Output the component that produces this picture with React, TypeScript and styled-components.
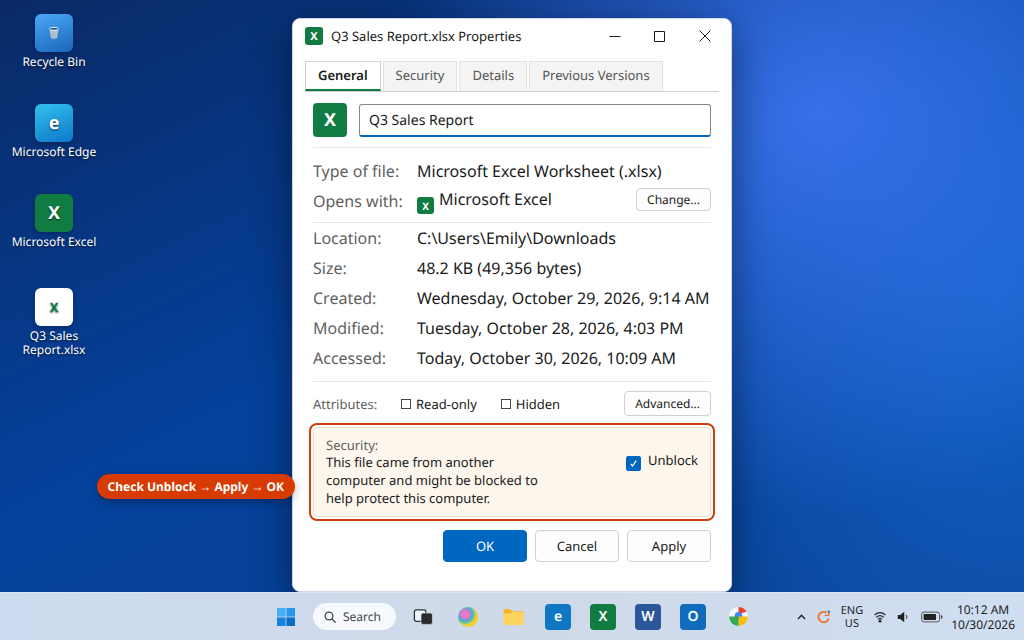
import React from "react";
import styled, { createGlobalStyle, css } from "styled-components";

const GlobalStyle = createGlobalStyle`
  *, *::before, *::after { box-sizing: border-box; text-rendering: geometricPrecision; }
  body {
    margin: 0;
    font-family: "Noto Sans", "Liberation Sans", sans-serif;
    font-size: 13px;
    color: #1a1a1a;
  }
  button, input { font: inherit; color: inherit; margin: 0; }
  button { cursor: pointer; }
  svg { display: block; }
`;

const Screen = styled.div`
  min-height: 100vh;
  display: flex;
  flex-direction: column;
  overflow: hidden;
  background:
    radial-gradient(ellipse 42% 62% at 80% 18%, rgba(66, 120, 246, 0.8), rgba(66, 120, 246, 0) 100%),
    radial-gradient(ellipse 40% 90% at 98% 45%, rgba(24, 116, 226, 0.65), rgba(24, 116, 226, 0) 100%),
    linear-gradient(155deg, #0a2a66 0%, #04419c 46%, #0a4192 100%);
`;

const Desktop = styled.main`
  flex: 1;
  display: grid;
  grid-template-columns: minmax(0, 1fr);
  > * { grid-area: 1 / 1; }
`;

const Shortcuts = styled.nav`
  justify-self: start;
  display: flex;
  flex-direction: column;
  gap: 35px;
  width: 92px;
  margin: 14px 8px;
`;

const Shortcut = styled.a<{ $file?: boolean }>`
  display: flex;
  flex-direction: column;
  align-items: center;
  gap: 3px;
  margin-top: ${(p) => (p.$file ? 4 : 0)}px;
  color: #fff;
  font-size: 12px;
  line-height: 14px;
  text-align: center;
  text-decoration: none;
  text-shadow: 0 1px 2px rgba(0, 0, 0, 0.7);
`;

const ShortcutTile = styled.span<{ $bg: string; $color?: string; $size?: number }>`
  display: grid;
  place-items: center;
  width: 38px;
  height: 38px;
  border-radius: 6px;
  background: ${(p) => p.$bg};
  color: ${(p) => p.$color ?? "#fff"};
  font-size: ${(p) => p.$size ?? 18}px;
  font-weight: 700;
  box-shadow: 0 2px 5px rgba(0, 0, 0, 0.25);
`;

const ShortcutLabel = styled.span`
  max-width: 100%;
`;

const Dialog = styled.section`
  justify-self: center;
  width: 440px;
  max-width: 100%;
  margin-top: 18px;
  padding: 0 12px 29px;
  border: 1px solid #cfd6e2;
  border-radius: 8px;
  background: #fff;
  box-shadow: 0 12px 40px rgba(0, 0, 0, 0.45);
`;

const TitleBar = styled.header`
  display: flex;
  align-items: center;
  height: 34px;
  margin-bottom: 8px;
`;

const Title = styled.h1`
  flex: 1;
  margin: 0 0 0 8px;
  font-size: 13px;
  font-weight: 400;
`;

const Badge = styled.span<{ $size: number; $font: number; $radius: number }>`
  flex: none;
  display: grid;
  place-items: center;
  width: ${(p) => p.$size}px;
  height: ${(p) => p.$size}px;
  border-radius: ${(p) => p.$radius}px;
  background: #107c41;
  color: #fff;
  font-size: ${(p) => p.$font}px;
  font-weight: 700;
  line-height: 1;
`;

const WindowControls = styled.div`
  display: flex;
  margin-right: -8px;
`;

const WindowButton = styled.button`
  display: grid;
  place-items: center;
  width: 45px;
  height: 34px;
  padding: 0;
  border: 0;
  background: transparent;
`;

const Tabs = styled.div`
  display: flex;
  gap: 2px;
  border-bottom: 1px solid #d0d0d0;
`;

const Tab = styled.button<{ $active?: boolean }>`
  height: 30px;
  padding: 0 12px 3px;
  border: 1px solid #e0e0e0;
  border-bottom: 0;
  background: #f4f4f4;
  color: #555;
  ${(p) =>
    p.$active &&
    css`
      padding-bottom: 1px;
      border-color: #d0d0d0;
      border-bottom: 2px solid #107c41;
      background: #fff;
      color: #1a1a1a;
      font-weight: 600;
    `}
`;

const Panel = styled.form`
  padding: 11px 8px 0;
`;

const NameRow = styled.div`
  display: flex;
  align-items: center;
  gap: 12px;
  padding-bottom: 10px;
`;

const NameInput = styled.input`
  flex: 1;
  min-width: 0;
  height: 33px;
  padding: 1px 9px 0;
  border: 1px solid #868686;
  border-bottom: 2px solid #0067c0;
  border-radius: 3px;
  background: #fff;
  font-size: 14px;
  outline: none;
`;

const Facts = styled.dl<{ $top: number; $bottom: number }>`
  margin: 0;
  padding: ${(p) => p.$top}px 0 ${(p) => p.$bottom}px;
  border-top: 1px solid #e8e8e8;
  font-size: 16px;
`;

const Fact = styled.div`
  display: grid;
  grid-template-columns: 104px minmax(0, 1fr);
  align-items: center;
  height: 30px;
  white-space: nowrap;
`;

const Term = styled.dt`
  color: #5f5f5f;
`;

const Detail = styled.dd`
  display: flex;
  align-items: center;
  margin: 0;
`;

const OpenerDetail = styled(Detail)`
  align-items: flex-start;
  height: 26px;
`;

const OpenerBadge = styled(Badge)`
  margin: 9px 5px 0 0;
`;

const SmallButton = styled.button`
  height: 23px;
  margin-left: auto;
  padding: 0 10px;
  border: 1px solid #d0d0d0;
  border-radius: 4px;
  background: #fdfdfd;
  font-size: 12px;
`;

const AdvancedButton = styled(SmallButton)`
  height: 25px;
`;

const AttributeRow = styled.div`
  display: flex;
  align-items: center;
  padding: 9px 0 11px;
  border-top: 1px solid #e8e8e8;
`;

const AttributeTitle = styled.span`
  width: 88px;
  color: #5f5f5f;
`;

const CheckLabel = styled.label`
  display: flex;
  align-items: center;
  gap: 5px;
  margin-right: 24px;
`;

const PlainCheck = styled.input`
  appearance: none;
  width: 10px;
  height: 10px;
  border: 1px solid #444;
  background: #fff;
`;

const SecurityBox = styled.section`
  position: relative;
  display: flex;
  justify-content: space-between;
  padding: 9px 12px 9px;
  border: 1px solid #e6dfd2;
  border-radius: 4px;
  background: #fdf6ec;
  outline: 2px solid #c9400f;
  outline-offset: 2px;
`;

const SecurityText = styled.div`
  width: 220px;
  line-height: 18px;
`;

const SecurityTitle = styled.div`
  line-height: 16px;
  color: #5f5f5f;
`;

const UnblockLabel = styled.label`
  display: flex;
  align-items: flex-start;
  gap: 7px;
  margin-top: 14px;
  line-height: 18px;
  height: 24px;
`;

const UnblockBox = styled.span`
  display: grid;
  margin-top: 5px;
  > * { grid-area: 1 / 1; }
`;

const UnblockCheck = styled.input`
  appearance: none;
  width: 15px;
  height: 15px;
  border-radius: 2px;
  border: 1px solid #0067c0;
  background: #fff;
  &:checked { background: #0067c0; }
`;

const Callout = styled.div`
  position: absolute;
  top: 46px;
  right: calc(100% + 19px);
  padding: 0 11px;
  border-radius: 13px;
  background: #d83b01;
  color: #fff;
  font-size: 12px;
  font-weight: 700;
  line-height: 25px;
  white-space: nowrap;
  box-shadow: 0 3px 8px rgba(0, 0, 0, 0.3);
`;

const Actions = styled.div`
  display: flex;
  justify-content: flex-end;
  gap: 8px;
  margin-top: 13px;
`;

const ActionButton = styled.button<{ $primary?: boolean }>`
  width: 84px;
  height: 32px;
  padding: 0;
  border: 1px solid ${(p) => (p.$primary ? "#0067c0" : "#d0d0d0")};
  border-radius: 4px;
  background: ${(p) => (p.$primary ? "#0067c0" : "#fdfdfd")};
  color: ${(p) => (p.$primary ? "#fff" : "#1a1a1a")};
`;

const Taskbar = styled.footer`
  display: grid;
  grid-template-columns: 1fr auto 1fr;
  align-items: center;
  height: 48px;
  border-top: 1px solid #dbe4f1;
  background: linear-gradient(90deg, #cddcf0, #cfd9e8 50%, #d0def2);
`;

const Pinned = styled.div`
  grid-column: 2;
  display: flex;
  align-items: center;
  gap: 9px;
`;

const PinButton = styled.button`
  display: grid;
  place-items: center;
  width: 36px;
  height: 36px;
  padding: 0;
  border: 0;
  background: transparent;
`;

const SearchButton = styled.button`
  display: flex;
  align-items: center;
  gap: 7px;
  width: 83px;
  height: 27px;
  padding: 0 0 0 11px;
  border: 0;
  border-radius: 14px;
  background: #f6f9fd;
  color: #444;
  font-size: 12px;
`;

const AppTile = styled.span<{ $bg: string }>`
  display: grid;
  place-items: center;
  width: 26px;
  height: 26px;
  border-radius: 4px;
  background: ${(p) => p.$bg};
  color: #fff;
  font-size: 14px;
  font-weight: 600;
`;

const Tray = styled.div`
  justify-self: end;
  display: flex;
  align-items: center;
  margin-right: 9px;
  color: #222;
  font-size: 11px;
  line-height: 13px;
  text-align: center;
`;

const TrayIcons = styled.div`
  display: flex;
  align-items: center;
  gap: 11px;
  margin-right: 8px;
`;

const Clock = styled.time`
  font-size: 12px;
  line-height: 15px;
`;

const facts = [
  ["Location:", "C:\\Users\\Emily\\Downloads"],
  ["Size:", "48.2 KB (49,356 bytes)"],
  ["Created:", "Wednesday, October 29, 2026, 9:14 AM"],
  ["Modified:", "Tuesday, October 28, 2026, 4:03 PM"],
  ["Accessed:", "Today, October 30, 2026, 10:09 AM"],
];

const BinIcon = () => (
  <svg width="12" height="14" viewBox="0 0 12 14">
    <path d="M1.6 3 L3 12 Q6 13.6 9 12 L10.4 3Z" fill="#c3ccd6" />
    <path d="M3.8 5 L4.4 11.8 M6 5V12.4 M8.2 5 L7.6 11.8" stroke="#93a1b1" strokeWidth=".7" />
    <ellipse cx="6" cy="2.8" rx="4.7" ry="1.5" fill="#1f5d9c" stroke="#edf3f8" strokeWidth="1" />
  </svg>
);

const StartIcon = () => (
  <svg width="18" height="18" viewBox="0 0 18 18">
    <path d="M0 0h8.6v8.6H0z" fill="#45aef7" />
    <path d="M9.4 0H18v8.6H9.4z" fill="#2b97ec" />
    <path d="M0 9.4h8.6V18H0z" fill="#1583df" />
    <path d="M9.4 9.4H18V18H9.4z" fill="#0d6cc4" />
  </svg>
);

const SearchIcon = () => (
  <svg width="12" height="12" viewBox="0 0 12 12" fill="none" stroke="#444" strokeWidth="1.3" strokeLinecap="round">
    <circle cx="5" cy="5" r="3.9" />
    <path d="M8 8l3.2 3.2" />
  </svg>
);

const TaskViewIcon = () => (
  <svg width="20" height="18" viewBox="0 0 20 18">
    <rect x="1.4" y="1.9" width="11.4" height="11.4" rx="1.8" fill="#eef3fa" stroke="#333" strokeWidth="1.3" />
    <rect x="8" y="5" width="11.4" height="11.4" rx="2" fill="#2b2b2b" stroke="#d5deec" strokeWidth=".7" />
  </svg>
);

const CopilotIcon = () => (
  <svg width="20" height="20" viewBox="0 0 20 20">
    <defs>
      <radialGradient id="orb" cx="36%" cy="36%" r="66%">
        <stop offset="0" stopColor="#f57cc4" />
        <stop offset=".32" stopColor="#d879cc" />
        <stop offset=".52" stopColor="#44afd6" />
        <stop offset=".66" stopColor="#72c496" />
        <stop offset=".82" stopColor="#f0d02e" />
        <stop offset="1" stopColor="#f8cf14" />
      </radialGradient>
    </defs>
    <circle cx="10" cy="10" r="10" fill="url(#orb)" />
  </svg>
);

const FolderIcon = () => (
  <svg width="21" height="18" viewBox="0 0 21 18">
    <path d="M.5 2.2Q.5 1 1.7 1H7l2.2 2.2h10.1q1.2 0 1.2 1.2V9H.5z" fill="#f3b52f" />
    <path d="M.5 5.2h8L10.3 4h9q1.2 0 1.2 1.2v10.6q0 1.2-1.2 1.2H1.7Q.5 17 .5 15.8z" fill="#ffd45c" />
  </svg>
);

const ChromeIcon = () => (
  <svg width="19" height="19" viewBox="0 0 19 19">
    <circle cx="9.5" cy="9.5" r="9.5" fill="#f5f7fa" />
    <path d="M9.5 9.5V0A9.5 9.5 0 0 1 17.7 4.7L13 6z" fill="#ea4335" />
    <path d="M9.5 9.5H19A9.5 9.5 0 0 1 9.5 19z" fill="#fbbc05" />
    <path d="M9.5 9.5V19A9.5 9.5 0 0 1 0 9.5z" fill="#34a853" />
    <circle cx="9.5" cy="8.8" r="3.8" fill="#4285f4" />
    <path d="M9.5 9.5h4v3.5h-4z" fill="#fbbc05" />
    <path d="M5.5 9.5h4v3.5h-4z" fill="#34a853" />
  </svg>
);

const ChevronIcon = () => (
  <svg width="9" height="6" viewBox="0 0 9 6" fill="none" stroke="#222" strokeWidth="1.4">
    <path d="M1 5l3.5-3.7L8 5" />
  </svg>
);

const SyncIcon = () => (
  <svg width="13" height="14" viewBox="0 0 13 14" fill="none">
    <path d="M9.6 2.8A5.2 5.2 0 1 0 11.7 8.4" stroke="#f0722b" strokeWidth="1.8" />
    <path d="M11.8 1v4.4H7.6" stroke="#f0722b" strokeWidth="1.3" />
    <path d="M9.8.8h2.8v2.7z" fill="#1b78d0" />
  </svg>
);

const WifiIcon = () => (
  <svg width="12" height="12" viewBox="0 0 12 12" fill="none" stroke="#222" strokeWidth="1.2">
    <path d="M.6 4Q6-.6 11.4 4M2.3 6.2Q6 3 9.7 6.2M4 8.2Q6 6.4 8 8.2" />
    <circle cx="6" cy="10.2" r="1.4" fill="#222" stroke="none" />
  </svg>
);

const VolumeIcon = () => (
  <svg width="13" height="12" viewBox="0 0 13 12">
    <path d="M.8 4h2.4L7.2.8v10.4L3.2 8H.8z" fill="#222" />
    <path d="M9.2 4Q10.6 6 9.2 8" fill="none" stroke="#555" strokeWidth="1.2" />
  </svg>
);

const BatteryIcon = () => (
  <svg width="22" height="12" viewBox="0 0 22 12">
    <rect x=".6" y="1.1" width="18" height="9.8" rx="2.4" fill="none" stroke="#555" />
    <rect x="2.6" y="3" width="12.4" height="6" rx=".8" fill="#222" />
    <path d="M20 4q1.6.3 1.6 2T20 8z" fill="#444" />
  </svg>
);

export default function App() {
  return (
    <Screen>
      <GlobalStyle />
      <Desktop>
        <Shortcuts aria-label="Desktop shortcuts">
          <Shortcut href="#bin">
            <ShortcutTile $bg="linear-gradient(160deg, #4aa8f8, #1a66b8)"><BinIcon /></ShortcutTile>
            <ShortcutLabel>Recycle Bin</ShortcutLabel>
          </Shortcut>
          <Shortcut href="#edge">
            <ShortcutTile $bg="linear-gradient(160deg, #34c1ee, #0c78c8)">e</ShortcutTile>
            <ShortcutLabel>Microsoft Edge</ShortcutLabel>
          </Shortcut>
          <Shortcut href="#excel">
            <ShortcutTile $bg="#107c41">X</ShortcutTile>
            <ShortcutLabel>Microsoft Excel</ShortcutLabel>
          </Shortcut>
          <Shortcut href="#report" $file>
            <ShortcutTile $bg="#fff" $color="#107c41" $size={13}>X</ShortcutTile>
            <ShortcutLabel>Q3 Sales Report.xlsx</ShortcutLabel>
          </Shortcut>
        </Shortcuts>

        <Dialog role="dialog" aria-labelledby="dialog-title">
          <TitleBar>
            <Badge $size={18} $font={11} $radius={3}>X</Badge>
            <Title id="dialog-title">Q3 Sales Report.xlsx Properties</Title>
            <WindowControls>
              <WindowButton type="button" aria-label="Minimize">
                <svg width="12" height="12" viewBox="0 0 12 12" stroke="#1a1a1a"><path d="M.5 6.5h11" /></svg>
              </WindowButton>
              <WindowButton type="button" aria-label="Maximize">
                <svg width="12" height="12" viewBox="0 0 12 12" stroke="#1a1a1a" fill="none"><path d="M.5 1.500h10v10H.5z" /></svg>
              </WindowButton>
              <WindowButton type="button" aria-label="Close">
                <svg width="12" height="12" viewBox="0 0 12 12" stroke="#1a1a1a"><path d="M.5.5l11 11M11.5.5l-11 11" /></svg>
              </WindowButton>
            </WindowControls>
          </TitleBar>

          <Tabs role="tablist">
            <Tab type="button" role="tab" aria-selected="true" $active>General</Tab>
            <Tab type="button" role="tab" aria-selected="false">Security</Tab>
            <Tab type="button" role="tab" aria-selected="false">Details</Tab>
            <Tab type="button" role="tab" aria-selected="false">Previous Versions</Tab>
          </Tabs>

          <Panel onSubmit={(e) => e.preventDefault()}>
            <NameRow>
              <Badge $size={34} $font={18} $radius={4}>X</Badge>
              <NameInput aria-label="File name" defaultValue="Q3 Sales Report" />
            </NameRow>

            <Facts $top={8} $bottom={6}>
              <Fact>
                <Term>Type of file:</Term>
                <Detail>Microsoft Excel Worksheet (.xlsx)</Detail>
              </Fact>
              <Fact>
                <Term>Opens with:</Term>
                <OpenerDetail>
                  <OpenerBadge $size={17} $font={10} $radius={3}>X</OpenerBadge>
                  Microsoft Excel
                  <SmallButton type="button">Change...</SmallButton>
                </OpenerDetail>
              </Fact>
            </Facts>

            <Facts $top={0} $bottom={8}>
              {facts.map(([term, detail]) => (
                <Fact key={term}>
                  <Term>{term}</Term>
                  <Detail>{detail}</Detail>
                </Fact>
              ))}
            </Facts>

            <AttributeRow>
              <AttributeTitle>Attributes:</AttributeTitle>
              <CheckLabel><PlainCheck type="checkbox" />Read-only</CheckLabel>
              <CheckLabel><PlainCheck type="checkbox" />Hidden</CheckLabel>
              <AdvancedButton type="button">Advanced...</AdvancedButton>
            </AttributeRow>

            <SecurityBox>
              <SecurityText>
                <SecurityTitle>Security:</SecurityTitle>
                This file came from another computer and might be blocked to help protect this computer.
              </SecurityText>
              <UnblockLabel>
                <UnblockBox>
                  <UnblockCheck type="checkbox" defaultChecked />
                  <svg width="15" height="15" viewBox="0 0 15 15" fill="none" stroke="#fff" strokeWidth="1.2" pointerEvents="none">
                    <path d="M4.8 7.8l1.8 2.2 3.6-5.4" />
                  </svg>
                </UnblockBox>
                Unblock
              </UnblockLabel>
              <Callout>Check Unblock → Apply → OK</Callout>
            </SecurityBox>

            <Actions>
              <ActionButton type="submit" $primary>OK</ActionButton>
              <ActionButton type="button">Cancel</ActionButton>
              <ActionButton type="button">Apply</ActionButton>
            </Actions>
          </Panel>
        </Dialog>
      </Desktop>

      <Taskbar>
        <Pinned>
          <PinButton aria-label="Start"><StartIcon /></PinButton>
          <SearchButton><SearchIcon />Search</SearchButton>
          <PinButton aria-label="Task view"><TaskViewIcon /></PinButton>
          <PinButton aria-label="Copilot"><CopilotIcon /></PinButton>
          <PinButton aria-label="File Explorer"><FolderIcon /></PinButton>
          <PinButton aria-label="Edge"><AppTile $bg="#0f78c4">e</AppTile></PinButton>
          <PinButton aria-label="Excel"><AppTile $bg="#107c41">X</AppTile></PinButton>
          <PinButton aria-label="Word"><AppTile $bg="#2b579a">W</AppTile></PinButton>
          <PinButton aria-label="Outlook"><AppTile $bg="#0f6cbd">O</AppTile></PinButton>
          <PinButton aria-label="Chrome"><ChromeIcon /></PinButton>
        </Pinned>
        <Tray>
          <TrayIcons>
            <ChevronIcon />
            <SyncIcon />
            <span>ENG<br />US</span>
            <WifiIcon />
            <VolumeIcon />
            <BatteryIcon />
          </TrayIcons>
          <Clock>10:12 AM<br />10/30/2026</Clock>
        </Tray>
      </Taskbar>
    </Screen>
  );
}
